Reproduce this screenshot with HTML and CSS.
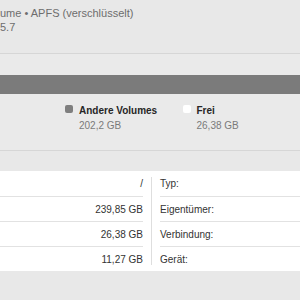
FILE: index.html
```html
<!DOCTYPE html>
<html>
<head>
<meta charset="utf-8">
<link rel="stylesheet" href="styles.css">
</head>
<body>
<div class="window">
  <header class="info">
    <div class="sub">ume • APFS (verschlüsselt)</div>
    <div class="sub">5.7</div>
  </header>
  <section class="usage">
    <div class="bar"></div>
    <div class="legend">
      <div class="item">
        <span class="swatch gray"></span>
        <div class="ltext">
          <div class="lname">Andere Volumes</div>
          <div class="lsize">202,2 GB</div>
        </div>
      </div>
      <div class="item">
        <span class="swatch white"></span>
        <div class="ltext">
          <div class="lname">Frei</div>
          <div class="lsize">26,38 GB</div>
        </div>
      </div>
    </div>
  </section>
  <section class="details">
    <div class="col left">
      <div class="row"><span class="val">/</span></div>
      <div class="row"><span class="val">239,85 GB</span></div>
      <div class="row"><span class="val">26,38 GB</span></div>
      <div class="row"><span class="val">11,27 GB</span></div>
    </div>
    <div class="divider"></div>
    <div class="col right">
      <div class="row"><span class="key">Typ:</span></div>
      <div class="row"><span class="key">Eigentümer:</span></div>
      <div class="row"><span class="key">Verbindung:</span></div>
      <div class="row"><span class="key">Gerät:</span></div>
    </div>
  </section>
</div>
</body>
</html>
```

FILE: styles.css
```css
html, body {
  margin: 0;
  padding: 0;
}
body {
  width: 300px;
  height: 300px;
  overflow: hidden;
  background: #e8e8e8;
  font-family: "Liberation Sans", Arial, sans-serif;
  font-size: 11px;
  color: #2b2b2b;
}
.window {
  width: 300px;
}
.info {
  padding-top: 6px;
  height: 47px;
  border-bottom: 1px solid #d6d6d6;
}
.sub {
  color: #6d6d6d;
  line-height: 14px;
  white-space: nowrap;
}
.usage {
  padding-top: 21px;
  height: 75px;
  border-bottom: 1px solid #d6d6d6;
  background: #eaeaea;
}
.bar {
  height: 19px;
  background: #7b7b7b;
}
.legend {
  display: flex;
  padding-left: 65px;
  padding-top: 10px;
  font-size: 10px;
}
.item {
  display: flex;
  gap: 6px;
  width: 181px;
}
.swatch {
  width: 8px;
  height: 8px;
  border-radius: 2px;
  margin-top: 1px;
  flex: none;
}
.swatch.gray { background: #7f7f7f; }
.swatch.white { background: #ffffff; }
.lname {
  font-weight: bold;
  color: #262626;
  line-height: 12px;
  margin-top: 1px;
}
.lsize {
  color: #7a7a7a;
  line-height: 12px;
  margin-top: 3px;
}
.details {
  margin-top: 20px;
  background: #ffffff;
  height: 100px;
  display: flex;
  font-size: 10px;
}
.col.left {
  width: 143px;
}
.col.right {
  flex: 1;
  padding-left: 8px;
}
.divider {
  width: 1px;
  background: #dedede;
  margin: 6px 0 6px 8px;
}
.row {
  height: 25px;
  box-sizing: border-box;
  display: flex;
  align-items: center;
  color: #333333;
}
.row + .row {
  border-top: 1px solid #e2e2e2;
}
.left .row {
  justify-content: flex-end;
}
```
